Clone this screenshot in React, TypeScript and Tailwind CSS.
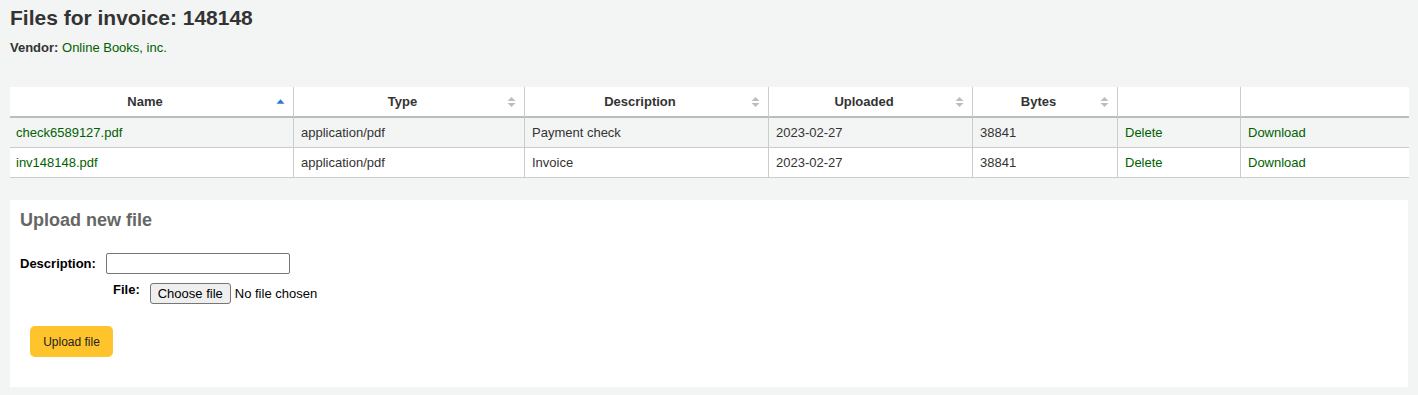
import React from "react";

function SortBoth() {
  return (
    <svg
      className="absolute right-[8px] top-1/2 -translate-y-1/2"
      width="9"
      height="10"
      viewBox="0 0 9 10"
    >
      <polygon points="0.5,4 4.5,0 8.5,4" fill="#bdbdbd" />
      <polygon points="0.5,6 4.5,10 8.5,6" fill="#bdbdbd" />
    </svg>
  );
}

function SortAsc() {
  return (
    <svg
      className="absolute right-[8px] top-[12px]"
      width="9"
      height="5"
      viewBox="0 0 9 5"
    >
      <polygon points="0.5,4.7 4.5,0.3 8.5,4.7" fill="#2a78d6" />
    </svg>
  );
}

type Row = {
  name: string;
  type: string;
  desc: string;
  date: string;
  bytes: string;
};

const rows: Row[] = [
  {
    name: "check6589127.pdf",
    type: "application/pdf",
    desc: "Payment check",
    date: "2023-02-27",
    bytes: "38841",
  },
  {
    name: "inv148148.pdf",
    type: "application/pdf",
    desc: "Invoice",
    date: "2023-02-27",
    bytes: "38841",
  },
];

export default function App() {
  const th =
    "relative bg-white h-[31px] pl-[8px] pr-[21px] py-[5px] leading-[19px] text-[13px] font-bold text-[#333] text-center border-b-2 border-b-[#bcbcbc]";
  const thL = " border-l border-l-[#cccccc]";
  const td =
    "h-[30px] pr-[7px] py-[5px] leading-[19px] text-[13px] text-[#333] text-left border-b border-b-[#cccccc] whitespace-nowrap";
  const tdL = " pl-[7px] border-l border-l-[#cccccc]";
  const link = "text-[#006100]";

  return (
    <div className="min-h-screen bg-[#f3f4f4] px-[10px] font-['Liberation_Sans',Arial,sans-serif] text-[#333]">
      <h1 className="pt-[5px] text-[21px] leading-[26px] font-bold text-[#333]">
        Files for invoice: 148148
      </h1>
      <div className="mt-[8px] text-[13px] leading-[18px]">
        <span className="font-bold">Vendor:</span>{" "}
        <a className={link}>Online Books, inc.</a>
      </div>

      <table className="mt-[30px] w-full table-fixed border-separate border-spacing-0">
        <colgroup>
          <col className="w-[283px]" />
          <col className="w-[231px]" />
          <col className="w-[244px]" />
          <col className="w-[204px]" />
          <col className="w-[145px]" />
          <col className="w-[123px]" />
          <col className="w-[169px]" />
        </colgroup>
        <thead>
          <tr>
            <th className={th}>
              Name
              <SortAsc />
            </th>
            <th className={th + thL}>
              Type
              <SortBoth />
            </th>
            <th className={th + thL}>
              Description
              <SortBoth />
            </th>
            <th className={th + thL}>
              Uploaded
              <SortBoth />
            </th>
            <th className={th + thL}>
              Bytes
              <SortBoth />
            </th>
            <th className={th + thL}></th>
            <th className={th + thL}></th>
          </tr>
        </thead>
        <tbody>
          {rows.map((r, i) => {
            const bg = i % 2 === 0 ? " bg-[#f3f4f4]" : " bg-white";
            return (
              <tr key={r.name}>
                <td className={td + " pl-[6px]" + bg}>
                  <a className={link}>{r.name}</a>
                </td>
                <td className={td + tdL + bg}>{r.type}</td>
                <td className={td + tdL + bg}>{r.desc}</td>
                <td className={td + tdL + bg}>{r.date}</td>
                <td className={td + tdL + bg}>{r.bytes}</td>
                <td className={td + tdL + bg}>
                  <a className={link}>Delete</a>
                </td>
                <td className={td + tdL + bg}>
                  <a className={link}>Download</a>
                </td>
              </tr>
            );
          })}
        </tbody>
      </table>

      <div className="mt-[22px] bg-white px-[10px] pt-[9px] pb-[30px]">
        <h3 className="text-[18px] leading-[22px] font-bold text-[#666]">
          Upload new file
        </h3>

        <div className="mt-[22px] flex items-center">
          <label className="text-[13px] leading-[18px] font-bold text-black">
            Description:
          </label>
          <div className="ml-[10px] h-[21px] w-[184px] rounded-[2px] border border-[#767676] bg-white"></div>
        </div>

        <div className="mt-[9px] flex items-start">
          <label className="ml-[93px] text-[13px] leading-[14px] font-bold text-black">
            File:
          </label>
          <div className="ml-[10px] flex items-center">
            <span className="flex h-[21px] items-center rounded-[3px] border border-[#767676] bg-[#efefef] px-[7px] text-[13px] text-black">
              Choose file
            </span>
            <span className="ml-[4px] text-[13px] text-black">
              No file chosen
            </span>
          </div>
        </div>

        <button className="mt-[22px] ml-[10px] flex h-[31px] w-[83px] items-center justify-center rounded-[5px] bg-[#ffc32b] text-[12px] text-[#222]">
          Upload file
        </button>
      </div>
    </div>
  );
}
